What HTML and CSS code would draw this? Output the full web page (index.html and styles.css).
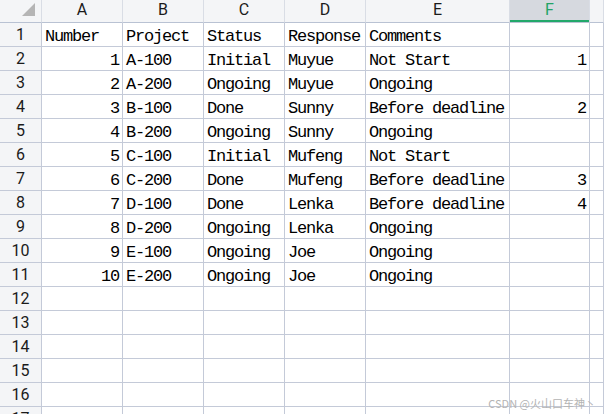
FILE: index.html
```html
<!DOCTYPE html>
<html>
<head>
<meta charset="utf-8">
<link rel="stylesheet" href="styles.css">
</head>
<body>
<div class="sheet">
  <div class="h corner"><svg class="tri" width="42" height="23" viewBox="0 0 42 23"><polygon points="35,3 35,16 22,16" fill="#b5b5b5"/></svg></div>
  <div class="h">A</div><div class="h">B</div><div class="h">C</div><div class="h">D</div><div class="h">E</div><div class="h sel">F</div><div class="h"></div>

  <div class="rh">1</div><div class="c">Number</div><div class="c">Project</div><div class="c">Status</div><div class="c">Response</div><div class="c">Comments</div><div class="c"></div><div class="c"></div>
  <div class="rh">2</div><div class="c num">1</div><div class="c">A-100</div><div class="c">Initial</div><div class="c">Muyue</div><div class="c">Not Start</div><div class="c num">1</div><div class="c"></div>
  <div class="rh">3</div><div class="c num">2</div><div class="c">A-200</div><div class="c">Ongoing</div><div class="c">Muyue</div><div class="c">Ongoing</div><div class="c"></div><div class="c"></div>
  <div class="rh">4</div><div class="c num">3</div><div class="c">B-100</div><div class="c">Done</div><div class="c">Sunny</div><div class="c">Before deadline</div><div class="c num">2</div><div class="c"></div>
  <div class="rh">5</div><div class="c num">4</div><div class="c">B-200</div><div class="c">Ongoing</div><div class="c">Sunny</div><div class="c">Ongoing</div><div class="c"></div><div class="c"></div>
  <div class="rh">6</div><div class="c num">5</div><div class="c">C-100</div><div class="c">Initial</div><div class="c">Mufeng</div><div class="c">Not Start</div><div class="c"></div><div class="c"></div>
  <div class="rh">7</div><div class="c num">6</div><div class="c">C-200</div><div class="c">Done</div><div class="c">Mufeng</div><div class="c">Before deadline</div><div class="c num">3</div><div class="c"></div>
  <div class="rh">8</div><div class="c num">7</div><div class="c">D-100</div><div class="c">Done</div><div class="c">Lenka</div><div class="c">Before deadline</div><div class="c num">4</div><div class="c"></div>
  <div class="rh">9</div><div class="c num">8</div><div class="c">D-200</div><div class="c">Ongoing</div><div class="c">Lenka</div><div class="c">Ongoing</div><div class="c"></div><div class="c"></div>
  <div class="rh">10</div><div class="c num">9</div><div class="c">E-100</div><div class="c">Ongoing</div><div class="c">Joe</div><div class="c">Ongoing</div><div class="c"></div><div class="c"></div>
  <div class="rh">11</div><div class="c num">10</div><div class="c">E-200</div><div class="c">Ongoing</div><div class="c">Joe</div><div class="c">Ongoing</div><div class="c"></div><div class="c"></div>
  <div class="rh">12</div><div class="c"></div><div class="c"></div><div class="c"></div><div class="c"></div><div class="c"></div><div class="c"></div><div class="c"></div>
  <div class="rh">13</div><div class="c"></div><div class="c"></div><div class="c"></div><div class="c"></div><div class="c"></div><div class="c"></div><div class="c"></div>
  <div class="rh">14</div><div class="c"></div><div class="c"></div><div class="c"></div><div class="c"></div><div class="c"></div><div class="c"></div><div class="c"></div>
  <div class="rh">15</div><div class="c"></div><div class="c"></div><div class="c"></div><div class="c"></div><div class="c"></div><div class="c"></div><div class="c"></div>
  <div class="rh">16</div><div class="c"></div><div class="c"></div><div class="c"></div><div class="c"></div><div class="c"></div><div class="c"></div><div class="c"></div>
  <div class="rh">17</div><div class="c"></div><div class="c"></div><div class="c"></div><div class="c"></div><div class="c"></div><div class="c"></div><div class="c"></div>
</div>
<div class="wm">CSDN @火山口车神丶</div>
</body>
</html>
```
FILE: styles.css
```css
html, body {
  margin: 0;
  padding: 0;
  background: #ffffff;
  overflow: hidden;
  width: 604px;
  height: 414px;
}
.sheet {
  display: grid;
  grid-template-columns: 42px 81px 81px 81px 81px 144px 80px 1fr;
  grid-template-rows: 23px;
  grid-auto-rows: 24px;
  width: 604px;
}
.sheet > div {
  box-sizing: border-box;
  border-right: 1px solid #c4cad8;
  border-bottom: 1px solid #c4cad8;
  overflow: hidden;
  white-space: nowrap;
}
.sheet > .h {
  background: #f4f5f7;
  font-family: Roboto, "Noto Sans", sans-serif;
  font-size: 16px;
  line-height: 19px;
  text-align: center;
  color: #1b1b1b;
  border-right-color: #d9dde5;
  border-bottom-color: #b9c2d3;
}
.corner {
  position: relative;
}
.tri {
  position: absolute;
  left: 0;
  top: 0;
}
.sheet > .sel {
  background: #d6d9df;
  color: #21a366;
  box-shadow: inset 0 -2px 0 #22a86a;
}
.rh {
  background: #f4f5f7;
  font-family: Roboto, "Noto Sans", sans-serif;
  font-size: 16px;
  line-height: 22px;
  padding-top: 1px;
  text-align: center;
  color: #1b1b1b;
}
.c {
  font-family: "Liberation Mono", "DejaVu Sans Mono", monospace;
  font-size: 17px;
  letter-spacing: -1.2px;
  line-height: 20px;
  padding: 4px 4px 0 3px;
  color: #000;
}
.num {
  text-align: right;
  padding-right: 3px;
}
.wm {
  position: absolute;
  right: 8px;
  bottom: 4px;
  font-family: "Noto Sans CJK SC", "Noto Sans", sans-serif;
  font-size: 11px;
  line-height: 14px;
  color: #b4b4b4;
}
```
